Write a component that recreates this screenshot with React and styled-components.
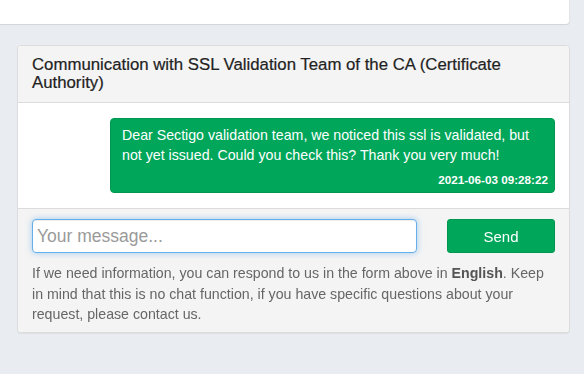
import React from 'react';
import styled, { createGlobalStyle } from 'styled-components';

const GlobalStyle = createGlobalStyle`
  html, body {
    margin: 0;
    padding: 0;
    background: #e9ecf0;
    font-family: "Liberation Sans", Arial, sans-serif;
  }
`;

const Page = styled.div`
  display: flex;
  flex-direction: column;
  gap: 21px;
  padding: 0 14px 40px 17px;
  height: 374px;
  box-sizing: border-box;
`;

const TopCard = styled.div`
  height: 24px;
  margin-left: -17px;
  background: #fff;
  border-radius: 0 0 4px 0;
  box-shadow: 0 1px 1px rgba(0, 0, 0, 0.1);
  border-right: 1px solid #e2e4e8;
`;

const Card = styled.div`
  display: flex;
  flex-direction: column;
  background: #fff;
  border: 1px solid #dcdcdc;
  border-radius: 4px;
  box-shadow: 0 1px 1px rgba(0, 0, 0, 0.06);
  overflow: hidden;
`;

const CardHeader = styled.div`
  background: #f4f4f4;
  border-bottom: 1px solid #dcdcdc;
  padding: 10px 14px 10px 14px;
  font-size: 16.8px;
  line-height: 18px;
  color: #222;
  -webkit-text-stroke: 0.2px #222;
`;

const Messages = styled.div`
  display: flex;
  flex-direction: column;
  align-items: flex-end;
  padding: 15px 14px;
  background: #fff;
`;

const Bubble = styled.div`
  width: 445px;
  box-sizing: border-box;
  background: #00a65a;
  border: 1px solid #00984f;
  border-radius: 4px;
  color: #fff;
  padding: 6px 6px 5px 11px;
  font-size: 14.2px;
  line-height: 20px;
`;

const Stamp = styled.div`
  text-align: right;
  font-size: 11.7px;
  font-weight: bold;
  line-height: 14px;
  margin-top: 8px;
`;

const Footer = styled.div`
  background: #f4f4f4;
  border-top: 1px solid #dcdcdc;
  padding: 10px 14px 7px 14px;
  display: flex;
  flex-direction: column;
  gap: 10px;
`;

const FormRow = styled.div`
  display: flex;
  gap: 30px;
`;

const Input = styled.input`
  flex: 1;
  height: 34px;
  box-sizing: border-box;
  border: 1px solid #66afe9;
  border-radius: 4px;
  box-shadow: inset 0 1px 1px rgba(0, 0, 0, 0.075), 0 0 6px rgba(102, 175, 233, 0.6);
  padding: 6px 4px;
  font-family: inherit;
  font-size: 17.5px;
  color: #555;
  outline: none;
  background: #fff;

  &::placeholder {
    color: #9a9a9a;
  }
`;

const SendButton = styled.button`
  width: 108px;
  height: 34px;
  background: #00a65a;
  border: 1px solid #00984f;
  border-radius: 3px;
  color: #fff;
  font-family: inherit;
  font-size: 15px;
  cursor: pointer;
`;

const Help = styled.p`
  margin: 0;
  color: #666;
  font-size: 14.2px;
  line-height: 20.5px;

  b {
    color: #555;
  }
`;

export default function App() {
  return (
    <>
      <GlobalStyle />
      <Page>
        <TopCard />
        <Card>
          <CardHeader>
            Communication with SSL Validation Team of the CA (Certificate Authority)
          </CardHeader>
          <Messages>
            <Bubble>
              Dear Sectigo validation team, we noticed this ssl is validated, but not yet
              issued. Could you check this? Thank you very much!
              <Stamp>2021-06-03 09:28:22</Stamp>
            </Bubble>
          </Messages>
          <Footer>
            <FormRow>
              <Input placeholder="Your message..." autoFocus />
              <SendButton>Send</SendButton>
            </FormRow>
            <Help>
              If we need information, you can respond to us in the form above in{' '}
              <b>English</b>. Keep in mind that this is no chat function, if you have
              specific questions about your request, please contact us.
            </Help>
          </Footer>
        </Card>
      </Page>
    </>
  );
}
